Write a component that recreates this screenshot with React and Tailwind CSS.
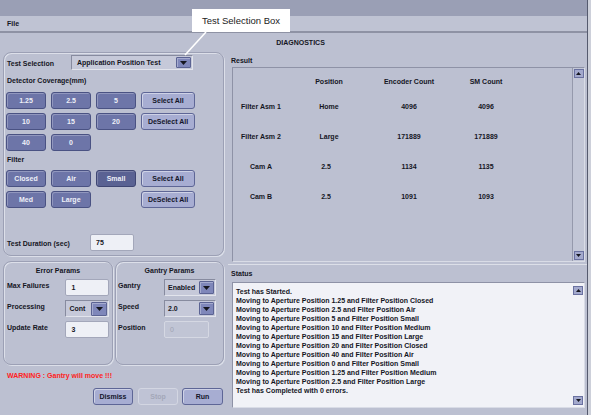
import React from 'react';

const Tri = ({ up = false, w = 7, h = 4 }) => (
  <svg width={w} height={h} viewBox={`0 0 ${w} ${h}`} className="block">
    <polygon points={up ? `0,${h} ${w},${h} ${w / 2},0` : `0,0 ${w},0 ${w / 2},${h}`} fill="#15161f" />
  </svg>
);

const Toggle = ({ children, dark }) => (
  <div
    className={
      dark
        ? 'h-[17px] w-[40px] rounded-[3px] border border-[#3f4673] bg-[#5a6293] text-[#eef0f8] flex items-center justify-center shadow-[inset_1px_1px_0_rgba(255,255,255,0.2)]'
        : 'h-[17px] w-[40px] rounded-[3px] border border-[#4a5283] bg-[#6d75a8] text-[#eef0f8] flex items-center justify-center shadow-[inset_1px_1px_0_rgba(255,255,255,0.25)]'
    }
  >
    {children}
  </div>
);

const LightBtn = ({ children, w = 'w-[54px]' }) => (
  <div
    className={`h-[17px] ${w} rounded-[3px] border border-[#5e6696] bg-[#a7add2] text-[#14162a] flex items-center justify-center shadow-[inset_1px_1px_0_rgba(255,255,255,0.45)]`}
  >
    {children}
  </div>
);

const ArrowBtn = ({ w = 'w-[16px]', h = 'h-[13px]' }) => (
  <div className={`${w} ${h} ml-auto mr-[1px] bg-[#7f87ba] border border-[#5b6393] rounded-[1px] flex items-center justify-center shadow-[inset_1px_1px_0_rgba(255,255,255,0.3)]`}>
    <Tri />
  </div>
);

const ScrollArrow = ({ up }) => (
  <div className="w-[10px] h-[9px] bg-[#a3a9cd] border border-[#6a71a0] flex items-center justify-center">
    <Tri up={up} w={5} h={3} />
  </div>
);

const Input = ({ value, w = 'w-[44px]' }) => (
  <div className={`h-[17px] ${w} rounded-[2px] bg-[#eef0f6] border border-[#a3a7ba] flex items-center pl-[5px]`}>
    {value}
  </div>
);

const statusLines = [
  'Test has Started.',
  'Moving to Aperture Position 1.25 and Filter Position Closed',
  'Moving to Aperture Position 2.5 and Filter Position Air',
  'Moving to Aperture Position 5 and Filter Position Small',
  'Moving to Aperture Position 10 and Filter Position Medium',
  'Moving to Aperture Position 15 and Filter Position Large',
  'Moving to Aperture Position 20 and Filter Position Closed',
  'Moving to Aperture Position 40 and Filter Position Air',
  'Moving to Aperture Position 0 and Filter Position Small',
  'Moving to Aperture Position 1.25 and Filter Position Medium',
  'Moving to Aperture Position 2.5 and Filter Position Large',
  'Test has Completed with 0 errors.',
];

const rows = [
  ['Filter Asm 1', 'Home', '4096', '4096'],
  ['Filter Asm 2', 'Large', '171889', '171889'],
  ['Cam A', '2.5', '1134', '1135'],
  ['Cam B', '2.5', '1091', '1093'],
];

export default function App() {
  return (
    <div className="w-[591px] h-[415px] bg-[#cdd0da] relative overflow-hidden font-['Liberation_Sans','Arial',sans-serif] text-[7px] leading-[9px] font-bold text-[#15161f]">
      <div className="w-[588px] h-full flex flex-col border-r border-[#555a6e] bg-[#bcc0d1]">
        {/* title bar */}
        <div className="h-[16px] bg-[#9a9fb5] shrink-0" />
        {/* menu bar */}
        <div className="h-[17px] shrink-0 bg-[#bfc3d3] border-b-2 border-[#8e92a4] flex items-center pl-[7px]">
          File
        </div>
        {/* main */}
        <div className="flex-1 flex flex-col">
          <div className="h-[19px] flex items-center justify-center pl-[14px]">DIAGNOSTICS</div>
          <div className="flex">
            {/* left column */}
            <div className="ml-[3px] w-[221px] flex flex-col">
              <div className="h-[204px] rounded-[8px] border border-[#9ca0b5] shadow-[inset_1px_1px_0_#dcdfe9,1px_1px_0_#dcdfe9] px-[2px] pt-[2px] flex flex-col">
                <div className="flex items-center h-[15px]">
                  <div className="w-[65px] pl-[1px] pt-[2px]">Test Selection</div>
                  <div className="w-[122px] h-[15px] flex items-center bg-[#c6c9d9] border border-t-[#878b9f] border-l-[#878b9f] border-b-[#e2e4ec] border-r-[#e2e4ec] pl-[5px]">
                    Application Position Test
                    <ArrowBtn w="w-[15px]" h="h-[11px]" />
                  </div>
                </div>
                <div className="mt-[6px] h-[10px] pl-[1px]">Detector Coverage(mm)</div>
                <div className="mt-[6px] grid grid-cols-[40px_40px_40px_54px] gap-x-[5px] gap-y-[4px]">
                  <Toggle>1.25</Toggle>
                  <Toggle>2.5</Toggle>
                  <Toggle>5</Toggle>
                  <LightBtn>Select All</LightBtn>
                  <Toggle>10</Toggle>
                  <Toggle>15</Toggle>
                  <Toggle>20</Toggle>
                  <LightBtn>DeSelect All</LightBtn>
                  <Toggle>40</Toggle>
                  <Toggle>0</Toggle>
                </div>
                <div className="mt-[4px] h-[10px] pl-[1px]">Filter</div>
                <div className="mt-[5px] grid grid-cols-[40px_40px_40px_54px] gap-x-[5px] gap-y-[4px]">
                  <Toggle>Closed</Toggle>
                  <Toggle>Air</Toggle>
                  <Toggle dark>Small</Toggle>
                  <LightBtn>Select All</LightBtn>
                  <Toggle>Med</Toggle>
                  <Toggle>Large</Toggle>
                  <div />
                  <LightBtn>DeSelect All</LightBtn>
                </div>
                <div className="mt-[26px] flex items-center h-[17px]">
                  <div className="w-[84px] pl-[1px] pt-[2px]">Test Duration (sec)</div>
                  <Input value="75" />
                </div>
              </div>

              <div className="mt-[5px] flex gap-[2px]">
                <div className="w-[110px] h-[104px] rounded-[8px] border border-[#9ca0b5] shadow-[inset_1px_1px_0_#dcdfe9,1px_1px_0_#dcdfe9] px-[3px] flex flex-col">
                  <div className="mt-[4px] h-[10px] text-center">Error Params</div>
                  <div className="mt-[3px] flex flex-col gap-[4px]">
                    <div className="flex items-center h-[17px]">
                      <div className="w-[59px] pb-[4px]">Max Failures</div>
                      <Input value="1" />
                    </div>
                    <div className="flex items-center h-[17px]">
                      <div className="w-[59px] pb-[4px]">Processing</div>
                      <div className="w-[44px] h-[17px] flex items-center bg-[#c6c9d9] border border-t-[#878b9f] border-l-[#878b9f] border-b-[#e2e4ec] border-r-[#e2e4ec] pl-[3px]">
                        Cont
                        <ArrowBtn w="w-[16px]" h="h-[14px]" />
                      </div>
                    </div>
                    <div className="flex items-center h-[17px]">
                      <div className="w-[59px] pb-[4px]">Update Rate</div>
                      <Input value="3" />
                    </div>
                  </div>
                </div>
                <div className="w-[109px] h-[104px] rounded-[8px] border border-[#9ca0b5] shadow-[inset_1px_1px_0_#dcdfe9,1px_1px_0_#dcdfe9] px-[2px] flex flex-col">
                  <div className="mt-[4px] h-[10px] text-center">Gantry Params</div>
                  <div className="mt-[3px] flex flex-col gap-[4px]">
                    <div className="flex items-center h-[17px]">
                      <div className="w-[46px] pb-[4px]">Gantry</div>
                      <div className="w-[52px] h-[17px] flex items-center bg-[#c6c9d9] border border-t-[#878b9f] border-l-[#878b9f] border-b-[#e2e4ec] border-r-[#e2e4ec] pl-[3px]">
                        Enabled
                        <ArrowBtn w="w-[15px]" h="h-[13px]" />
                      </div>
                    </div>
                    <div className="flex items-center h-[17px]">
                      <div className="w-[46px] pb-[4px]">Speed</div>
                      <div className="w-[52px] h-[17px] flex items-center bg-[#c6c9d9] border border-t-[#878b9f] border-l-[#878b9f] border-b-[#e2e4ec] border-r-[#e2e4ec] pl-[3px]">
                        2.0
                        <ArrowBtn w="w-[15px]" h="h-[13px]" />
                      </div>
                    </div>
                    <div className="flex items-center h-[17px]">
                      <div className="w-[46px] pb-[4px]">Position</div>
                      <div className="w-[45px] h-[17px] rounded-[2px] border border-[#d5d8e3] bg-[#c1c5d5] text-[#9ea2b3] font-normal flex items-center pl-[5px]">
                        0
                      </div>
                    </div>
                  </div>
                </div>
              </div>

              <div className="mt-[6px] h-[10px] pl-[4px] text-[#ff2222]">WARNING : Gantry will move !!!</div>
              <div className="mt-[7px] flex h-[17px] pl-[90px]">
                <LightBtn w="w-[40px]">Dismiss</LightBtn>
                <div className="ml-[5px] h-[17px] w-[40px] rounded-[3px] border border-[#d3d6e2] bg-[#bfc3d5] text-[#a3a7b8] flex items-center justify-center">
                  Stop
                </div>
                <div className="ml-[4px]">
                  <LightBtn w="w-[41px]">Run</LightBtn>
                </div>
              </div>
            </div>

            {/* right column */}
            <div className="ml-[5px] w-[358px] pl-[3px] pt-[4px] flex flex-col">
              <div className="h-[10px] -ml-[1px]">Result</div>
              <div className="mt-[1px] w-[353px] h-[195px] border border-t-[#8e92a6] border-l-[#8e92a6] border-b-[#d9dce6] border-r-[#d9dce6] flex">
                <div className="flex-1 flex flex-col">
                  <div className="mt-[8px] h-[10px] grid grid-cols-[56px_80px_80px_74px] text-center items-center">
                    <div />
                    <div>Position</div>
                    <div>Encoder Count</div>
                    <div>SM Count</div>
                  </div>
                  <div className="mt-[5px] flex flex-col">
                    {rows.map((r) => (
                      <div key={r[0]} className="h-[30px] grid grid-cols-[56px_80px_80px_74px] text-center items-center">
                        {r.map((c, i) => (
                          <div key={i} className={i === 1 && c === '2.5' ? 'pr-[6px]' : ''}>{c}</div>
                        ))}
                      </div>
                    ))}
                  </div>
                </div>
                <div className="w-[12px] border-l border-[#9599ac] bg-[#c2c6d6] flex flex-col items-center justify-between py-[1px]">
                  <ScrollArrow up />
                  <ScrollArrow />
                </div>
              </div>
              <div className="mt-[2px] -ml-[4px] h-px bg-[#dcdfe8]" />
              <div className="mt-[4px] h-[10px] -ml-[1px]">Status</div>
              <div className="mt-[3px] w-[353px] h-[126px] border border-t-[#8e92a6] border-l-[#8e92a6] border-b-[#d9dce6] border-r-[#d9dce6] bg-[#f1f2f7] flex">
                <div className="flex-1 pl-[3px] pt-[4px]">
                  {statusLines.map((l, i) => (
                    <div key={i} className="h-[9px] whitespace-nowrap">{l}</div>
                  ))}
                </div>
                <div className="w-[12px] flex flex-col items-center justify-between pt-[3px] pb-[2px]">
                  <ScrollArrow up />
                  <ScrollArrow />
                </div>
              </div>
            </div>
          </div>
        </div>
      </div>

      {/* callout annotation */}
      <svg className="absolute left-0 top-0 pointer-events-none" width="591" height="60">
        <line x1="185" y1="55" x2="206" y2="32" stroke="#ffffff" strokeWidth="1.6" />
      </svg>
      <div className="absolute left-[192px] top-[9px] w-[98px] h-[23px] bg-white flex items-center justify-center text-[9.5px] font-normal text-[#222] leading-none">
        Test Selection Box
      </div>
    </div>
  );
}
